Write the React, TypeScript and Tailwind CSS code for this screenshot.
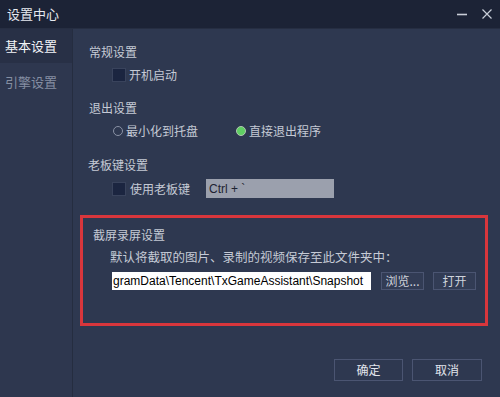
import React from "react";

const font = { fontFamily: '"Microsoft YaHei", "Noto Sans CJK SC", "Noto Sans", sans-serif' };

function Check() {
  return <span className="inline-block w-[14px] h-[14px] bg-[#1b2540] border border-[#39435c]" />;
}

export default function App() {
  return (
    <div className="w-[500px] h-[397px] bg-[#2e3850] flex flex-col overflow-hidden" style={font}>
      <div className="h-[29px] bg-[#1c2336] flex items-center justify-between pl-[7px] pr-[7px] shrink-0 border-b border-[#262e42]">
        <span className="text-[13px] text-[#e6e9ef]">设置中心</span>
        <div className="flex items-center gap-[13px]">
          <svg width="12" height="12" viewBox="0 0 12 12"><path d="M1 6.5H11" stroke="#c9ced8" strokeWidth="1.6" /></svg>
          <svg width="12" height="12" viewBox="0 0 12 12"><path d="M1.5 1.5L10.5 10.5M10.5 1.5L1.5 10.5" stroke="#c9ced8" strokeWidth="1.2" /></svg>
        </div>
      </div>
      <div className="flex flex-1">
        <div className="w-[73px] bg-[#2e374f] border-r border-[#252d40] flex flex-col shrink-0">
          <div className="h-[34px] bg-[#283046] flex items-center pl-[5px] text-[13px] text-[#f2f4f7]">基本设置</div>
          <div className="h-[38px] flex items-center pl-[5px] text-[13px] text-[#858ea2]">引擎设置</div>
        </div>
        <div className="flex-1 flex flex-col pl-[16px] pr-[12px] text-[12px] text-[#c5cad5]">
          <div className="pt-[15px] leading-[16px]">常规设置</div>
          <div className="flex items-center mt-[7px] ml-[23px] gap-[3px] leading-[16px]"><Check /><span>开机启动</span></div>
          <div className="mt-[17px] leading-[16px]">退出设置</div>
          <div className="flex items-center mt-[7px] ml-[24px] leading-[16px]">
            <span className="w-[10px] h-[10px] rounded-full border border-[#8a92a5] mr-[3px]" />
            <span>最小化到托盘</span>
            <span className="w-[10px] h-[10px] rounded-full bg-[#5fcf63] border border-[#b0c8b0] ml-[38px] mr-[3px]" />
            <span>直接退出程序</span>
          </div>
          <div className="mt-[18px] leading-[16px] -ml-[1px]">老板键设置</div>
          <div className="flex items-center mt-[6px] ml-[23px] leading-[16px]">
            <Check />
            <span className="ml-[4px]">使用老板键</span>
            <div className="ml-[16px] w-[128px] h-[19px] bg-[#9ba0ad] text-[#1e2332] text-[12px] flex items-center pl-[3px]" style={{ fontFamily: '"Liberation Sans", Arial, sans-serif' }}>Ctrl + `</div>
          </div>
          <div className="mt-[17px] -ml-[9px] w-[408px] h-[111px] border-[3px] border-[#d8363c] flex flex-col pl-[10px]">
            <div className="mt-[9px] leading-[16px]">截屏录屏设置</div>
            <div className="mt-[6px] ml-[17px] leading-[16px] text-[12.5px]">默认将截取的图片、录制的视频保存至此文件夹中：</div>
            <div className="flex items-center mt-[7px] ml-[19px]">
              <div className="shrink-0 w-[259px] h-[18px] bg-white text-black text-[12px] flex items-center pl-[1px] overflow-hidden whitespace-nowrap" style={{ fontFamily: '"Liberation Sans", Arial, sans-serif' }}>gramData\Tencent\TxGameAssistant\Snapshot</div>
              <div className="shrink-0 ml-[10px] w-[43px] h-[18px] border border-[#4b5572] bg-[#323c55] flex items-center justify-center text-[12px] text-[#cfd3dc]">浏览...</div>
              <div className="shrink-0 ml-[9px] w-[43px] h-[18px] border border-[#4b5572] bg-[#323c55] flex items-center justify-center text-[12px] text-[#cfd3dc]">打开</div>
            </div>
          </div>
          <div className="flex justify-end gap-[9px] mt-[33px] pr-[6px]">
            <div className="w-[69px] h-[22px] border border-[#4b5572] flex items-center justify-center text-[12px] text-[#e2e5ec]">确定</div>
            <div className="w-[70px] h-[22px] border border-[#4b5572] flex items-center justify-center text-[12px] text-[#e2e5ec]">取消</div>
          </div>
        </div>
      </div>
    </div>
  );
}
